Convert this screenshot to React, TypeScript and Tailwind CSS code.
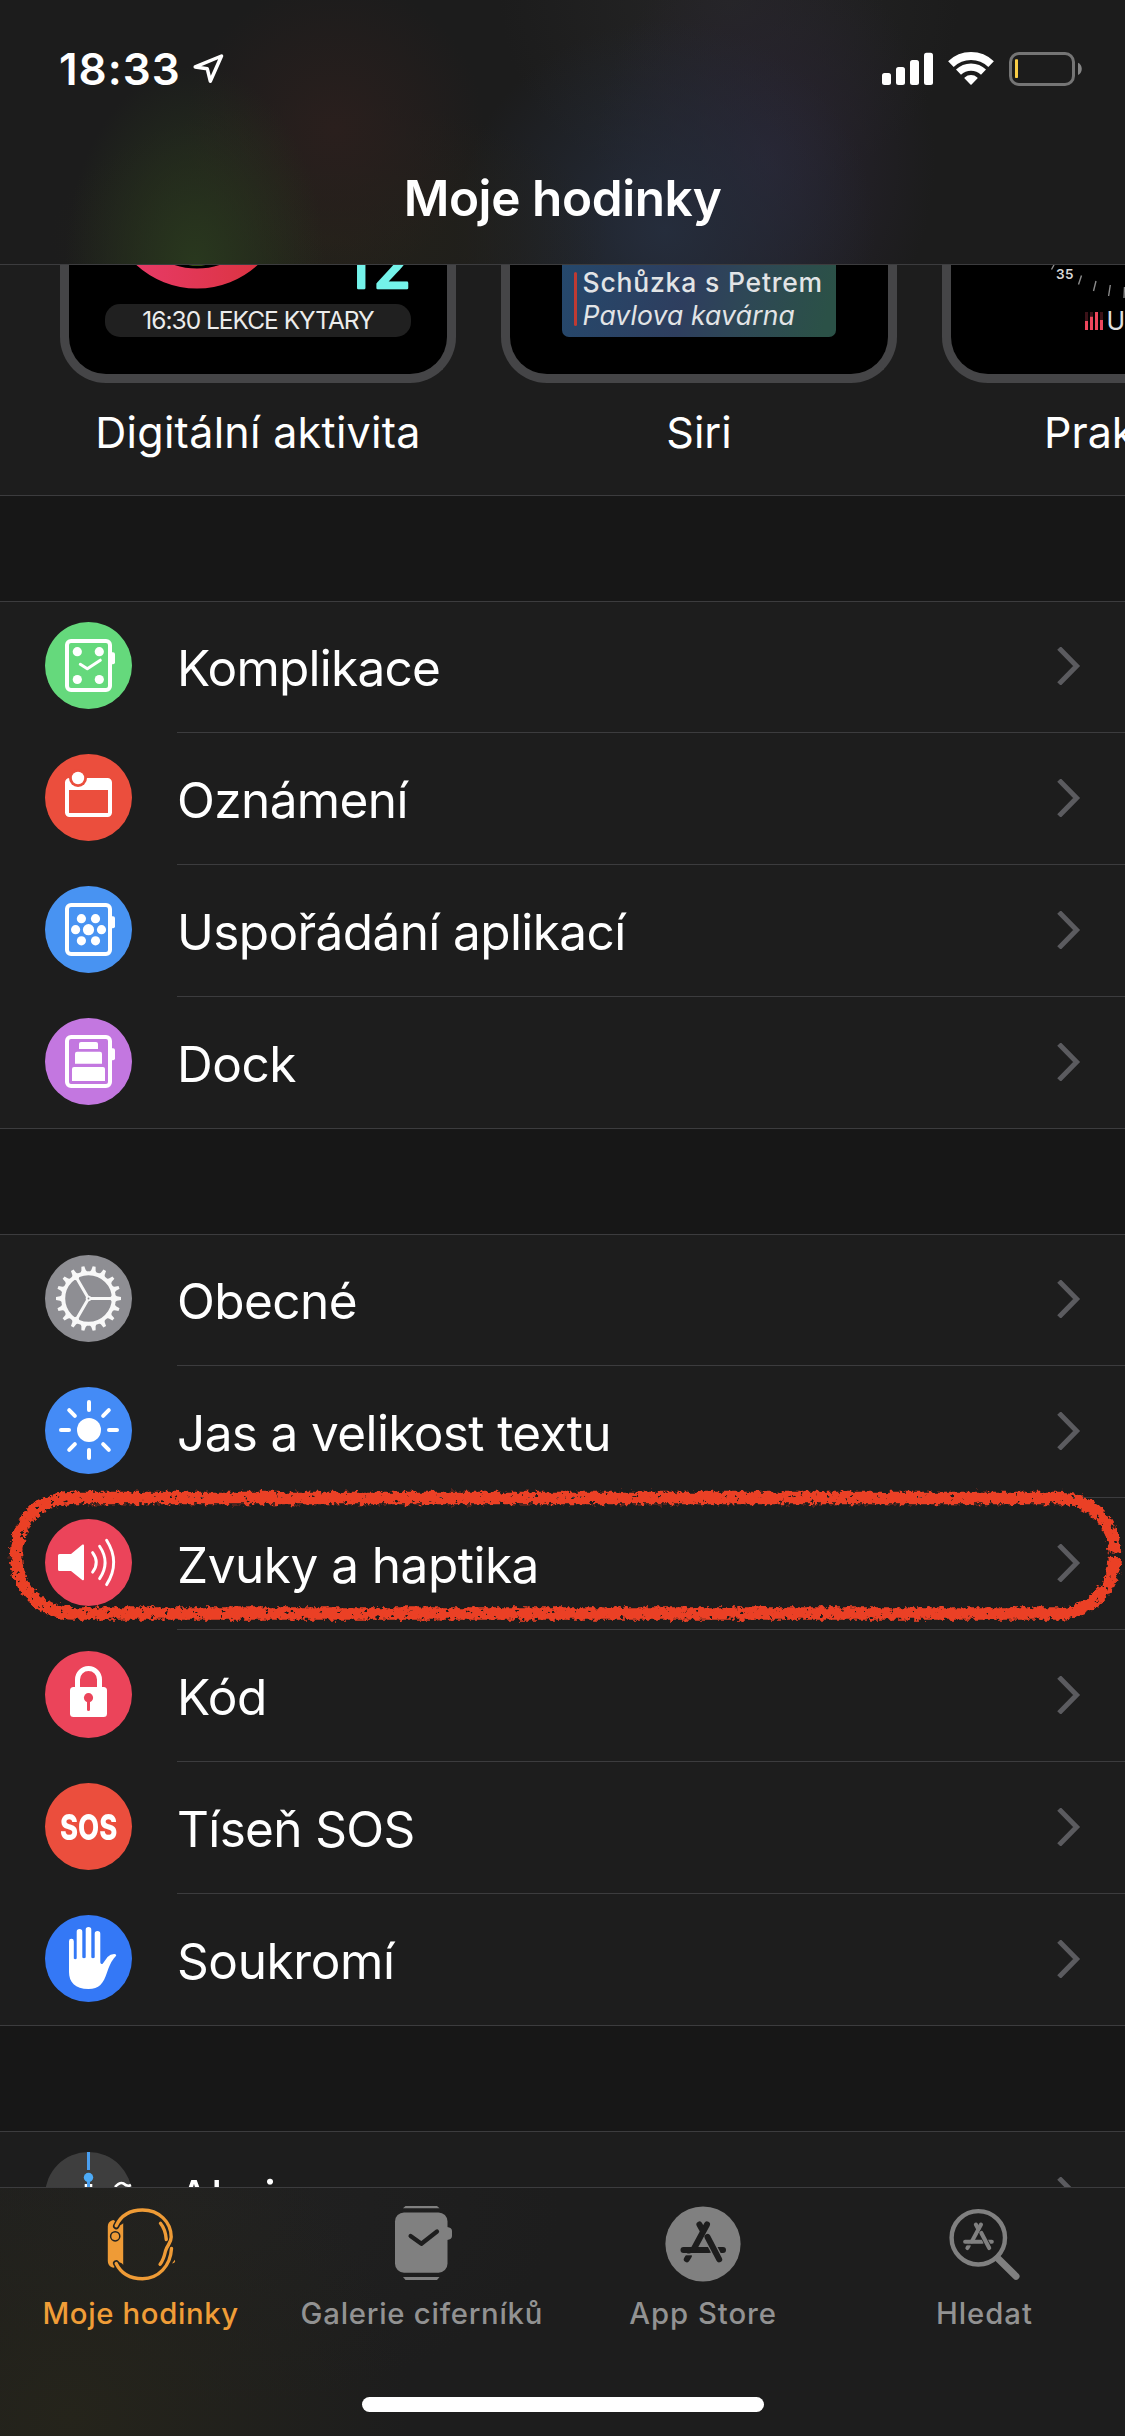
import type { ReactNode } from "react";

const GEAR_TEETH = Array.from({ length: 18 }, (_, i) => i * 20);
const SUN_RAYS = Array.from({ length: 8 }, (_, i) => i * 45);

/* ---------- status bar ---------- */

function StatusBar() {
  return (
    <div className="flex h-[138px] items-center justify-between pl-[59px] pr-[43px]">
      <div className="flex items-center gap-[11px]">
        <span className="text-[44px] font-semibold leading-[54px] tracking-[1px] text-white">18:33</span>
        <svg className="h-[32px] w-[32px]" viewBox="190 53 32 32" fill="none">
          <path d="M219.5 56L208.3 81.2L205.3 68.8L193.2 66.9Z" stroke="#fff" strokeWidth="3.5" strokeLinejoin="round" />
        </svg>
      </div>
      <div className="flex items-center gap-[15px]">
        <svg className="h-[34px] w-[51px]" viewBox="0 0 51 34" fill="#fff">
          <rect x="0" y="21" width="9" height="12" rx="2.5" />
          <rect x="14" y="15" width="9" height="18" rx="2.5" />
          <rect x="28" y="8" width="9" height="25" rx="2.5" />
          <rect x="42" y="0.8" width="9" height="32.2" rx="2.5" />
        </svg>
        <svg className="h-[34px] w-[46px]" viewBox="-23 -33 46 34" fill="none" stroke="#fff">
          <path d="M-20.1-20.9A29 29 0 0 1 20.1-20.9" strokeWidth="8" />
          <path d="M-12.5-12.9A18 18 0 0 1 12.5-12.9" strokeWidth="7.2" />
          <path d="M-5.8-7A9 9 0 0 1 5.8-7L0-1Z" fill="#fff" strokeWidth="1.6" strokeLinejoin="round" />
        </svg>
        <svg className="h-[34px] w-[73px]" viewBox="0 0 73 34" fill="none">
          <rect x="1.5" y="1.5" width="63" height="31" rx="8.5" stroke="#757575" strokeWidth="3" />
          <rect x="6" y="7.3" width="3" height="18.7" rx="0.8" fill="#f9cd46" />
          <path d="M69 10.7C74 12.5 74 21.2 69 23Z" fill="#858585" />
        </svg>
      </div>
    </div>
  );
}

function Header() {
  return (
    <header className="h-[265px] shrink-0 border-b border-[#3c3c3e] bg-[#1c1c1c] bg-[radial-gradient(ellipse_130px_200px_at_195px_265px,#29381e,transparent),radial-gradient(ellipse_150px_150px_at_335px_130px,#2a1f1d,transparent),radial-gradient(ellipse_280px_140px_at_330px_240px,#24221a,transparent),radial-gradient(ellipse_210px_210px_at_665px_230px,#252d3c,transparent),radial-gradient(ellipse_170px_220px_at_765px_160px,#292432,transparent),radial-gradient(ellipse_230px_200px_at_730px_0px,#252526,transparent)]">
      <StatusBar />
      <h1 className="pt-[30px] text-center text-[49.5px] font-semibold leading-[60px] tracking-[-0.41px] text-white">
        Moje hodinky
      </h1>
    </header>
  );
}

/* ---------- watch faces ---------- */

function Face({ children, label }: { children: ReactNode; label: ReactNode }) {
  return (
    <div className="w-[396px] shrink-0">
      <div className="relative h-[118px] overflow-hidden rounded-b-[46px] border-x-[9px] border-b-[9px] border-[#454547] bg-black">
        {children}
      </div>
      {label}
    </div>
  );
}

function Faces() {
  return (
    <section className="flex h-[231px] shrink-0 gap-[45px] overflow-hidden border-b border-[#3c3c3e] bg-[#1d1d1d] pl-[60px]">
      <Face
        label={<p className="mt-[19px] text-center text-[43px] leading-[60px] tracking-[0.3px] text-white">Digitální aktivita</p>}
      >
        <svg className="absolute left-0 top-0 h-[30px] w-[378px]" viewBox="69 265 378 30" fill="none">
          <defs>
            <linearGradient id="move" x1="107" x2="287" y1="0" y2="0" gradientUnits="userSpaceOnUse">
              <stop offset="0.2" stopColor="#e63a64" />
              <stop offset="0.8" stopColor="#dc3444" />
            </linearGradient>
          </defs>
          <circle cx="197" cy="198.5" r="80" stroke="url(#move)" strokeWidth="20" />
          <circle cx="197" cy="198.5" r="57.5" stroke="#6f9e2d" strokeWidth="19" />
          <text
            x="344 373"
            y="288"
            fill="#74f3ea"
            stroke="#74f3ea"
            strokeWidth="2.6"
            strokeLinejoin="round"
            fontFamily="Inter"
            fontSize="63"
            fontWeight="400"
          >
            12
          </text>
        </svg>
        <div className="mx-auto mt-[39px] flex h-[33px] w-[306px] items-center justify-center rounded-[15px] bg-[#202020]">
          <span className="whitespace-nowrap text-[24.5px] leading-[33px] tracking-[-1.01px] text-[#ececec]">16:30 LEKCE KYTARY</span>
        </div>
      </Face>
      <Face label={<p className="mt-[19px] text-center text-[43px] leading-[60px] text-white">Siri</p>}>
        <div className="ml-[52px] flex h-[72px] w-[274px] gap-[6px] rounded-b-[7px] bg-[linear-gradient(105deg,#25486c_0%,#2e3e5e_45%,#2e4756_65%,#2b5147_95%)] pl-[12px] pt-[7px]">
          <div className="h-[54px] w-[2.5px] shrink-0 rounded-full bg-[#bf3a33]" />
          <div className="flex flex-col whitespace-nowrap text-[26.5px] leading-[33px] text-[#e2e4e6]">
            <span className="mt-[-6px] font-medium tracking-[0.8px]">Schůzka s Petrem</span>
            <span className="italic tracking-[0.1px]">Pavlova kavárna</span>
          </div>
        </div>
      </Face>
      <Face label={<p className="mt-[19px] pl-[102px] text-[43px] leading-[60px] text-white">Prak</p>}>
        <svg className="absolute left-0 top-0 h-[109px] w-[378px]" viewBox="951 265 378 109" fill="none">
          <path
            d="M1054 265L1051.5 269.5M1081.5 275.5L1078.5 284.5M1096 281L1093.5 291M1110.3 285L1108.6 296M1124.5 287L1124 298"
            stroke="#8b8b8b"
            strokeWidth="1.4"
          />
          <text x="1056" y="279" fill="#d8d8d8" fontFamily="Inter" fontSize="13.5" fontWeight="600" letterSpacing="0.4">
            35
          </text>
          <path d="M1085 312h3v18h-3zM1090 312h3v18h-3zM1100 312h3v18h-3z" fill="#3c1218" />
          <path d="M1085 321h3v9h-3zM1090 316.700h3v13.300h-3zM1095 312h3v18h-3zM1100 320h3v10h-3z" fill="#ee465c" />
          <text x="1106.500" y="330" fill="#e0e0e0" fontFamily="Inter" fontSize="25">
            U
          </text>
        </svg>
      </Face>
    </section>
  );
}

/* ---------- list icons ---------- */

function Disc({ color, children }: { color: string; children?: ReactNode }) {
  return (
    <svg className="mt-[21px] size-[87px] shrink-0" viewBox="0 0 87 87" fill="none">
      <circle cx="43.5" cy="43.5" r="43.5" fill={color} />
      {children}
    </svg>
  );
}

function WatchFrame() {
  return (
    <>
      <rect x="22" y="18.900" width="43" height="49" rx="4" stroke="#fff" strokeWidth="4" />
      <path d="M66 30.300h2a2 2 0 0 1 2 2v8a2 2 0 0 1-2 2h-2z" fill="#fff" />
    </>
  );
}

function ComplicationsIcon() {
  return (
    <Disc color="#65d97c">
      <WatchFrame />
      <g fill="#fff">
        <circle cx="32.300" cy="29.700" r="4.600" />
        <circle cx="54.300" cy="29.700" r="4.600" />
        <circle cx="32.300" cy="57.500" r="4.600" />
        <circle cx="54.300" cy="57.500" r="4.600" />
      </g>
      <path d="M35.300 42.300L42.300 46.700L55.300 38.200" stroke="#fff" strokeWidth="3" strokeLinecap="round" strokeLinejoin="round" />
    </Disc>
  );
}

function NotificationsIcon() {
  return (
    <Disc color="#eb4e3d">
      <rect x="22" y="26" width="43" height="35" rx="2.500" stroke="#fff" strokeWidth="4" />
      <path d="M22 26h43v10H22z" fill="#fff" />
      <circle cx="33" cy="24" r="9" fill="#eb4e3d" />
      <circle cx="33" cy="24" r="6.200" fill="#fff" />
    </Disc>
  );
}

function AppLayoutIcon() {
  return (
    <Disc color="#4893f2">
      <WatchFrame />
      <g fill="#fff">
        <circle cx="43.500" cy="43.700" r="5.600" />
        <circle cx="36.400" cy="32.700" r="4.600" />
        <circle cx="50.500" cy="32.700" r="4.600" />
        <circle cx="30.600" cy="43.700" r="4.600" />
        <circle cx="56.500" cy="43.700" r="4.600" />
        <circle cx="36.400" cy="54.800" r="4.600" />
        <circle cx="50.500" cy="54.800" r="4.600" />
      </g>
    </Disc>
  );
}

function DockIcon() {
  return (
    <Disc color="#c377e0">
      <WatchFrame />
      <g fill="#fff">
        <path d="M34 31v-5a2 2 0 0 1 2-2h15a2 2 0 0 1 2 2v5z" />
        <path d="M30 45.800v-10a2 2 0 0 1 2-2h23a2 2 0 0 1 2 2v10z" />
        <path d="M27 63v-12a2 2 0 0 1 2-2h29a2 2 0 0 1 2 2v12z" />
      </g>
    </Disc>
  );
}

function GeneralIcon() {
  return (
    <Disc color="#8e8e93">
      <g transform="translate(43.5 43.500)">
        <circle r="25.300" stroke="#f8f8f8" strokeWidth="4" />
        {GEAR_TEETH.map((a) => (
          <path key={a} d="M26 -3.800L28.500 -2.200L32.500 -1.500V1.500L28.500 2.200L26 3.800Z" fill="#f8f8f8" transform={`rotate(${a})`} />
        ))}
        {[0, 120, 240].map((a) => (
          <path key={a} d="M0 -1.500H22L24.500 -4V4L22 1.500H0Z" fill="#f8f8f8" transform={`rotate(${a})`} />
        ))}
        <circle r="2.800" fill="#f8f8f8" />
        <circle r="0.900" fill="#8e8e93" />
      </g>
    </Disc>
  );
}

function BrightnessIcon() {
  return (
    <Disc color="#448bf6">
      <g transform="translate(44 43)">
        <circle r="12" fill="#fff" />
        {SUN_RAYS.map((a) => (
          <path key={a} d="M20 0H28" stroke="#fff" strokeWidth="4" strokeLinecap="round" transform={`rotate(${a})`} />
        ))}
      </g>
    </Disc>
  );
}

function SoundIcon() {
  return (
    <Disc color="#eb445a">
      <path d="M14.500 35H26L37.500 25.600Q39 25 39 26.500V60.300Q39 61.800 37.500 61.200L26 52H14.500Q13 52 13 50.500V36.500Q13 35 14.500 35Z" fill="#fff" />
      <path
        d="M47.600 33.600Q55 43.400 47.600 53.200M54.600 27.200Q65.600 43.400 54.600 59.600M61.600 21.200Q75.800 43.400 61.600 65.600"
        stroke="#fff"
        strokeWidth="2.900"
        strokeLinecap="round"
      />
    </Disc>
  );
}

function PasscodeIcon() {
  return (
    <Disc color="#eb445a">
      <rect x="25" y="36" width="37" height="30" rx="3.500" fill="#fff" />
      <path d="M32.500 37V28.500a11 11 0 0 1 22 0V37" stroke="#fff" strokeWidth="5" />
      <circle cx="43.500" cy="46.700" r="4.600" fill="#eb445a" />
      <path d="M43.500 48V58.600" stroke="#eb445a" strokeWidth="3" strokeLinecap="round" />
    </Disc>
  );
}

function SosIcon() {
  return (
    <div className="mt-[21px] flex size-[87px] shrink-0 items-center justify-center rounded-full bg-[#eb4e3d]">
      <span className="scale-x-[0.76] text-[36px] font-extrabold leading-none text-white">SOS</span>
    </div>
  );
}

function PrivacyIcon() {
  return (
    <Disc color="#3478f6">
      <path
        d="M24 26.200a2.400 2.400 0 0 1 4.800 0V43.500q1.400 1.400 2.900 0V16.800a2.800 2.800 0 0 1 5.600 0V42.500q1.700 1.400 3.400 0V14.800a2.800 2.800 0 0 1 5.600 0V42.500q1.700 1.400 3.400 0V18.800a2.800 2.800 0 0 1 5.600 0V47.500q.8 2.500 2.600 1L62.500 42Q66 38.600 70.500 39.200Q72 40 70.500 41.500C66 46 64 52 62 57.500C58.500 68.500 54 74 43.500 74C30 74 24 67 24 57Z"
        fill="#fff"
      />
    </Disc>
  );
}

function StocksIcon() {
  return (
    <Disc color="#3e3e3e">
      <path d="M41 32V40M46 32V40M70 35Q75 29.500 78.500 31.500Q82 35 86 33" stroke="#fff" strokeWidth="2.600" />
      <path d="M43.500 0V18M43.500 30V87" stroke="#4a9ff0" strokeWidth="3" />
      <circle cx="43.500" cy="25.500" r="4.700" fill="#4dabf7" />
    </Disc>
  );
}

/* ---------- list ---------- */

function Group({ children }: { children: ReactNode }) {
  return (
    <section className="relative shrink-0 bg-[#1d1d1d] before:absolute before:inset-x-0 before:top-0 before:h-px before:bg-[#3c3c3e] after:absolute after:inset-x-0 after:bottom-0 after:h-px after:bg-[#3c3c3e]">
      {children}
    </section>
  );
}

function Row({ icon, children }: { icon: ReactNode; children: ReactNode }) {
  return (
    <div className="flex h-[132px] gap-[45px] pl-[45px]">
      {icon}
      <div className="flex flex-1 justify-between border-b border-[#3c3c3e] pr-[44px] text-[49.5px] text-white">
        <span className="mt-[37px] whitespace-nowrap leading-[60px]">{children}</span>
        <svg className="mt-[45.5px] h-[38px] w-[24px]" viewBox="0 0 24 38" fill="none">
          <path d="M2 1.100L19.600 19L2 36.900" stroke="#5b5b5f" strokeWidth="5" />
        </svg>
      </div>
    </div>
  );
}

function Gap() {
  return <div className="h-[105px] shrink-0 bg-[#171717]" />;
}

function HighlightScribble() {
  return (
    <svg className="absolute left-0 top-[246px] h-[150px] w-[1125px]" viewBox="0 1480 1125 150" fill="none">
      <defs>
        <filter id="crayon" x="0" y="1480" width="1125" height="150" filterUnits="userSpaceOnUse" colorInterpolationFilters="sRGB">
          <feTurbulence type="fractalNoise" baseFrequency="0.2" numOctaves="3" seed="4" result="noise" />
          <feDisplacementMap in="SourceGraphic" in2="noise" scale="8" xChannelSelector="R" yChannelSelector="G" result="rough" />
          <feColorMatrix in="noise" type="matrix" values="0 0 0 0 0  0 0 0 0 0  0 0 0 0 0  0 0 14 0 -9.9" result="holes" />
          <feComposite in="rough" in2="holes" operator="out" />
        </filter>
      </defs>
      <path
        d="M1115 1553.500C1114 1520 1088 1498 1058 1498H72C38 1498 16 1522 16 1556C17 1590 42 1613.500 74 1613.500H1058C1090 1613.500 1114 1590 1115 1557"
        stroke="#eb4025"
        strokeWidth="12.500"
        filter="url(#crayon)"
      />
    </svg>
  );
}

/* ---------- tab bar ---------- */

function MyWatchIcon() {
  return (
    <svg className="h-[78px] w-[76px]" viewBox="102.500 2206 76 78" fill="none">
      <path
        d="M111.300 2220.500Q114.500 2219 115 2223A4.500 4.500 0 0 0 122.700 2223V2265A4.500 4.500 0 0 0 115 2264.500Q114.500 2269 111.300 2267.300Q107.300 2265.500 107.300 2261V2226.500Q107.300 2222 111.300 2220.500Z"
        fill="#ef9b36"
      />
      <g stroke="#222220" strokeWidth="6.500" strokeLinecap="round">
        <path d="M115.700 2226L117 2223.500M115.700 2263.300L117 2265.500" />
      </g>
      <circle cx="114.700" cy="2236.300" r="4.600" stroke="#222220" strokeWidth="1.500" />
      <g stroke="#ef9b36" strokeWidth="3.400" strokeLinecap="round">
        <path d="M115.700 2225.700C121 2214.500 131 2210 142 2210C158.500 2210 170.700 2222 170.700 2237C170.700 2243.500 166.500 2245 165 2251C163.800 2256.500 162.500 2260.500 159.600 2264.300" />
        <path d="M115.700 2263.500C121 2274.500 131 2278.700 142 2278.700C158 2278.700 170 2266 171 2248.500" />
        <path d="M160 2223.300Q165 2229.500 165.800 2239.500" />
      </g>
      <path d="M171.500 2263.500L174.300 2259.800Q175.600 2263 171.500 2263.500Z" fill="#ef9b36" />
    </svg>
  );
}

function FaceGalleryIcon() {
  return (
    <svg className="h-[78px] w-[76px]" viewBox="384 2206 76 78" fill="none">
      <g fill="#808080">
        <rect x="395" y="2212.400" width="52.500" height="60.300" rx="9" />
        <path d="M447 2227Q452 2227.500 452 2231V2236Q452 2239.500 447 2240Z" />
        <path d="M405.500 2206H437L439.500 2208.300H403Z" />
        <path d="M405.500 2280H437L439.500 2277H403Z" />
      </g>
      <path d="M410.600 2236L421.400 2243.800L437 2231.500" stroke="#1d1d1d" strokeWidth="4.300" strokeLinecap="round" strokeLinejoin="round" />
    </svg>
  );
}

/* Crossed-sticks mark, drawn around its own centre. */
function StoreMark({ color, gap }: { color: string; gap: string }) {
  return (
    <g strokeLinecap="round">
      <path d="M-19.500 6H6" stroke={color} strokeWidth="6" />
      <path d="M12.500 6H20" stroke={color} strokeWidth="6" />
      <path d="M4 -19.500L-9.500 5.500" stroke={color} strokeWidth="6" />
      <path d="M-14.200 12L-16.200 15.300" stroke={color} strokeWidth="6" />
      <path d="M-3.600 -19.500L0 -13" stroke={color} strokeWidth="6" />
      <path d="M4 -8L16.200 15.300" stroke={gap} strokeWidth="8.400" strokeLinecap="butt" />
      <path d="M4.500 -7L16.200 15.300" stroke={color} strokeWidth="6" />
      <path d="M-8 10.400L-20 10.400" stroke={gap} strokeWidth="1.800" strokeLinecap="butt" />
    </g>
  );
}

function AppStoreIcon() {
  return (
    <svg className="h-[78px] w-[76px]" viewBox="-38 -38 76 78" fill="none">
      <circle r="37.600" fill="#808080" />
      <StoreMark color="#1d1d1d" gap="#808080" />
    </svg>
  );
}

function SearchIcon() {
  return (
    <svg className="h-[78px] w-[76px]" viewBox="946 2206 76 78" fill="none">
      <circle cx="978.300" cy="2237.800" r="26.700" stroke="#808080" strokeWidth="4.400" />
      <path d="M998 2258.500L1016 2276.300" stroke="#808080" strokeWidth="7" strokeLinecap="round" />
      <g transform="translate(978.300 2237.700) scale(0.675)">
        <StoreMark color="#808080" gap="#1d1d1d" />
      </g>
    </svg>
  );
}

function TabBar() {
  return (
    <nav className="absolute inset-x-0 bottom-0 flex h-[249px] flex-col items-center border-t border-[#3c3c3e] bg-[#1d1d1d] bg-[radial-gradient(ellipse_340px_330px_at_70px_230px,#25241b,transparent),radial-gradient(ellipse_380px_200px_at_180px_20px,#212121,transparent)] text-[29.3px] font-medium leading-[36px]">
      <div className="grid w-full grid-cols-4 pt-[18px] text-[#929292]">
        <div className="flex flex-col items-center gap-[12px] text-[#f09d37]">
          <MyWatchIcon />
          <span className="tracking-[0.66px]">Moje hodinky</span>
        </div>
        <div className="flex flex-col items-center gap-[12px]">
          <FaceGalleryIcon />
          <span className="tracking-[0.75px]">Galerie ciferníků</span>
        </div>
        <div className="flex flex-col items-center gap-[12px]">
          <AppStoreIcon />
          <span className="tracking-[0.97px]">App Store</span>
        </div>
        <div className="flex flex-col items-center gap-[12px]">
          <SearchIcon />
          <span className="tracking-[0.97px]">Hledat</span>
        </div>
      </div>
      <div className="mt-[65px] h-[15px] w-[402px] rounded-full bg-white" />
    </nav>
  );
}

export default function App() {
  return (
    <div className="relative flex h-[2436px] w-[1125px] flex-col overflow-hidden bg-[#171717] font-['Inter',sans-serif]">
      <Header />
      <Faces />
      <Gap />
      <Group>
        <Row icon={<ComplicationsIcon />}><span className="tracking-[-0.76px]">Komplikace</span></Row>
        <Row icon={<NotificationsIcon />}><span className="tracking-[-0.6px]">Oznámení</span></Row>
        <Row icon={<AppLayoutIcon />}><span className="tracking-[-0.6px]">Uspořádání aplikací</span></Row>
        <Row icon={<DockIcon />}><span className="tracking-[-0.5px]">Dock</span></Row>
      </Group>
      <Gap />
      <Group>
        <Row icon={<GeneralIcon />}><span className="tracking-[-0.55px]">Obecné</span></Row>
        <Row icon={<BrightnessIcon />}><span className="tracking-[-0.62px]">Jas a velikost textu</span></Row>
        <Row icon={<SoundIcon />}><span className="tracking-[-0.5px]">Zvuky a haptika</span></Row>
        <Row icon={<PasscodeIcon />}><span className="tracking-[-0.49px]">Kód</span></Row>
        <Row icon={<SosIcon />}><span className="tracking-[-0.65px]">Tíseň SOS</span></Row>
        <Row icon={<PrivacyIcon />}><span className="tracking-[-0.4px]">Soukromí</span></Row>
        <HighlightScribble />
      </Group>
      <Gap />
      <Group>
        <Row icon={<StocksIcon />}><span className="tracking-[-0.5px]">Akcie</span></Row>
      </Group>
      <TabBar />
    </div>
  );
}
